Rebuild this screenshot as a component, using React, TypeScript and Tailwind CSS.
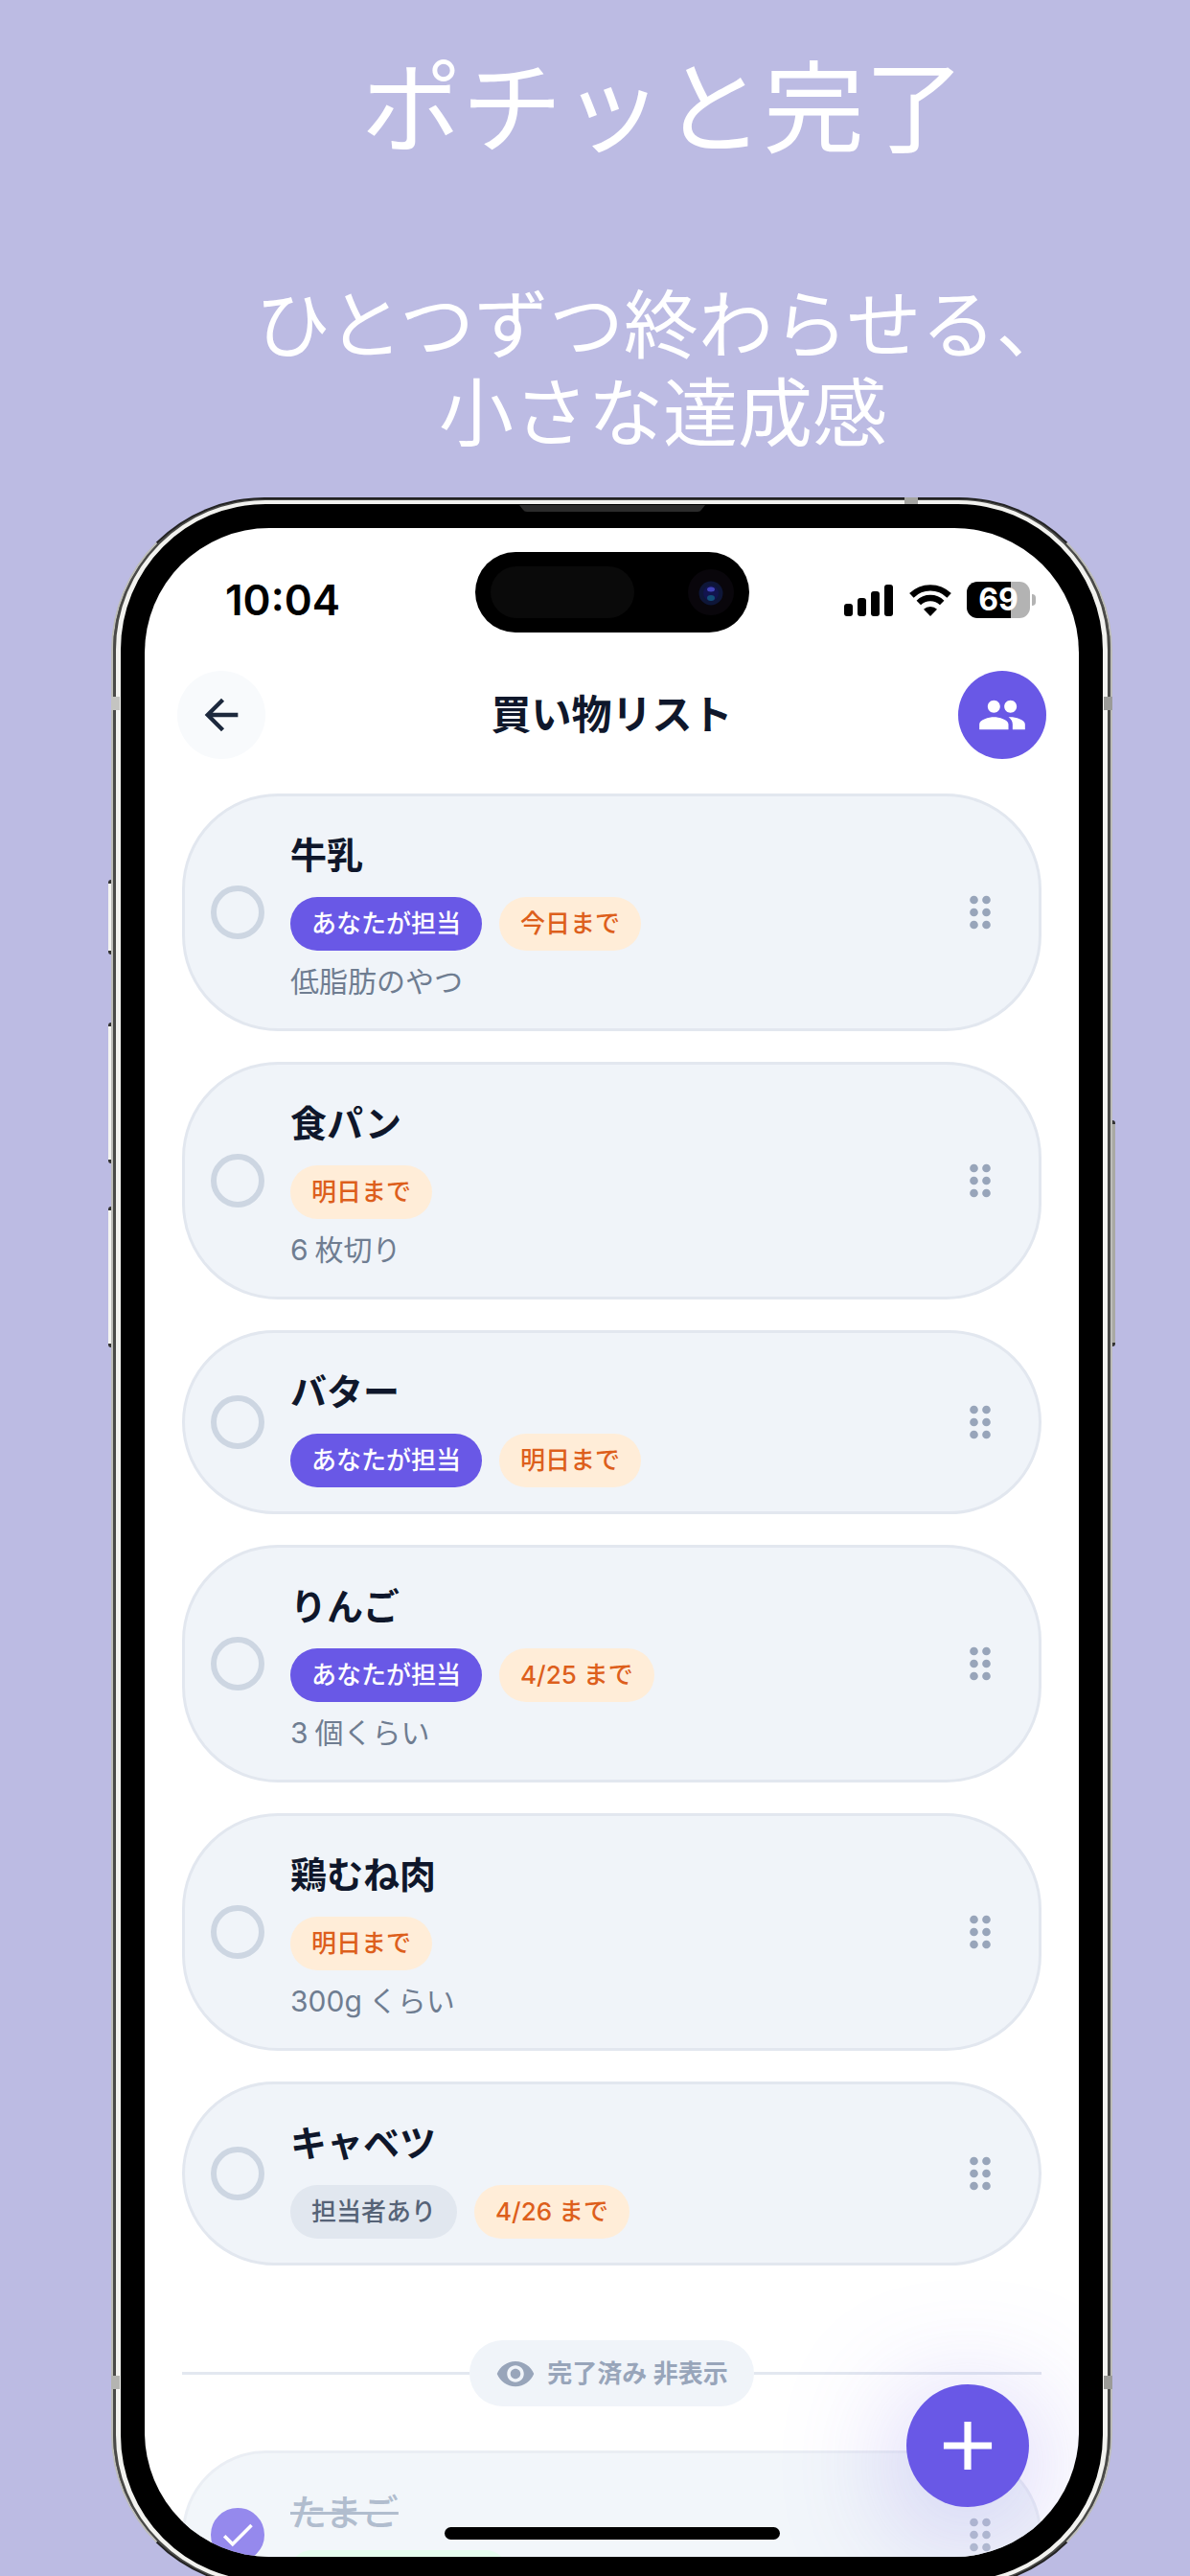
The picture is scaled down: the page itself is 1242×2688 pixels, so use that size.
import { useState } from "react";
import { clsx } from "clsx";
import {
  MdAdd,
  MdArrowBack,
  MdCheck,
  MdDragIndicator,
  MdPeople,
  MdVisibility,
} from "react-icons/md";

type TagKind = "mine" | "other" | "due";

type ShoppingItem = {
  id: string;
  name: string;
  tags: { kind: TagKind; label: string }[];
  note?: string;
};

const ITEMS: ShoppingItem[] = [
  {
    id: "milk",
    name: "牛乳",
    tags: [
      { kind: "mine", label: "あなたが担当" },
      { kind: "due", label: "今日まで" },
    ],
    note: "低脂肪のやつ",
  },
  { id: "bread", name: "食パン", tags: [{ kind: "due", label: "明日まで" }], note: "6枚切り" },
  {
    id: "butter",
    name: "バター",
    tags: [
      { kind: "mine", label: "あなたが担当" },
      { kind: "due", label: "明日まで" },
    ],
  },
  {
    id: "apple",
    name: "りんご",
    tags: [
      { kind: "mine", label: "あなたが担当" },
      { kind: "due", label: "4/25まで" },
    ],
    note: "3個くらい",
  },
  { id: "chicken", name: "鶏むね肉", tags: [{ kind: "due", label: "明日まで" }], note: "300gくらい" },
  {
    id: "cabbage",
    name: "キャベツ",
    tags: [
      { kind: "other", label: "担当者あり" },
      { kind: "due", label: "4/26まで" },
    ],
  },
];

const TAG_STYLES: Record<TagKind, string> = {
  mine: "bg-[#6958e6] text-white",
  other: "bg-[#e1e7ef] text-[#566377]",
  due: "bg-[#ffedd8] text-[#dd5f1c]",
};

// Leading digits keep a little distance from the Japanese text after them
function MixedText({ text }: { text: string }) {
  const lead = text.match(/^[\d/a-z]+/)?.[0] ?? "";

  return (
    <>
      {lead && <span className="mr-[7px]">{lead}</span>}
      {text.slice(lead.length)}
    </>
  );
}

function CheckCircle({
  id,
  checked,
  onChange,
}: {
  id: string;
  checked: boolean;
  onChange: () => void;
}) {
  return (
    <span className="relative flex size-14 shrink-0">
      <input
        id={id}
        type="checkbox"
        checked={checked}
        onChange={onChange}
        className="size-14 appearance-none rounded-full border-[6px] border-[#cdd6e2] checked:border-[#6958e6] checked:bg-[#6958e6]"
      />
      {checked && (
        <MdCheck className="pointer-events-none absolute inset-0 m-auto size-[42px] text-white" />
      )}
    </span>
  );
}

function DragHandle({ name }: { name: string }) {
  return (
    <button type="button" aria-label={`${name}を並べ替え`} className="shrink-0 text-[#98a5ba]">
      <MdDragIndicator className="size-[52px]" />
    </button>
  );
}

function ItemCard({ item }: { item: ShoppingItem }) {
  const [checked, setChecked] = useState(false);

  return (
    <li className="flex items-center gap-[27px] rounded-[100px] border-[3px] border-[#e2e7ef] bg-[#f0f4f9] py-[25px] pr-[35px] pl-[27px]">
      <CheckCircle id={item.id} checked={checked} onChange={() => setChecked(!checked)} />
      <div className="min-w-0 flex-1">
        <label htmlFor={item.id} className="mb-2 block text-[38px] leading-[72px] font-semibold text-slate-900">
          {item.name}
        </label>
        <div className="flex gap-[18px]">
          {item.tags.map((tag) => (
            <span
              key={tag.label}
              className={clsx("rounded-full px-[22px] text-[26px] leading-[56px] font-medium", TAG_STYLES[tag.kind])}
            >
              <MixedText text={tag.label} />
            </span>
          ))}
        </div>
        {item.note && (
          <p className="mt-2 text-[30px] leading-[48px] text-[#6f7d91]">
            <MixedText text={item.note} />
          </p>
        )}
      </div>
      <DragHandle name={item.name} />
    </li>
  );
}

function DoneCard() {
  const [checked, setChecked] = useState(true);

  return (
    <li className="flex items-center gap-[27px] rounded-[100px] border-[3px] border-[#e2e7ef] bg-[#edf3f8] py-[25px] pr-[35px] pl-[27px] opacity-70">
      <CheckCircle id="egg" checked={checked} onChange={() => setChecked(!checked)} />
      <div className="min-w-0 flex-1">
        <label htmlFor="egg" className="block text-[38px] leading-[72px] font-medium text-slate-400 line-through">
          たまご
        </label>
        <div className="mt-1 h-[43px] w-[226px] rounded-full bg-green-100" />
      </div>
      <DragHandle name="たまご" />
    </li>
  );
}

function StatusBar() {
  return (
    <div className="flex h-[149px] items-center justify-between pr-[45px] pl-[84px] text-black">
      <span className="text-[44px] leading-none font-semibold">10:04</span>
      <div className="flex items-center gap-4">
        <svg viewBox="0 0 52 34" className="h-[34px] w-[52px]" fill="currentColor">
          <rect x="0" y="21" width="9" height="13" rx="3" />
          <rect x="14" y="15" width="9" height="19" rx="3" />
          <rect x="28" y="8" width="9" height="26" rx="3" />
          <rect x="42" y="1" width="9" height="33" rx="3" />
        </svg>
        <svg viewBox="0 0 44 34" className="h-[34px] w-[44px]" fill="none" stroke="currentColor" strokeWidth="6.4">
          <path d="M2.4 12.4a28 28 0 0 1 39.2 0" />
          <path d="M9.8 20a17.4 17.4 0 0 1 24.4 0" />
          <path d="M22 34l-7-7.2a10 10 0 0 1 14 0z" fill="currentColor" stroke="none" />
        </svg>
        <div className="flex items-center gap-[2px]">
          <span className="flex h-[38px] w-[66px] items-center justify-center rounded-[11px] bg-[linear-gradient(90deg,#000_70%,#b3b3b3_70%)] text-[32px] leading-none font-bold text-white">
            69
          </span>
          <span className="h-3 w-1 rounded-r-full bg-[#b3b3b3]" />
        </div>
      </div>
    </div>
  );
}

function DynamicIsland() {
  return (
    <div className="absolute top-[25px] left-1/2 flex h-[84px] w-[286px] -translate-x-1/2 items-center justify-between rounded-full bg-black px-4">
      <div className="h-[54px] w-[150px] rounded-full bg-[#0a0a0a]" />
      <svg viewBox="0 0 48 48" className="size-12">
        <circle cx="24" cy="24" r="24" fill="#09060b" />
        <circle cx="24" cy="25" r="12.5" fill="#0e1638" />
        <circle cx="24" cy="25" r="8" fill="#12144e" />
        <ellipse cx="24" cy="21" rx="4" ry="2.5" fill="#4043b8" />
        <ellipse cx="24" cy="30" rx="4" ry="3" fill="#124f78" />
      </svg>
    </div>
  );
}

// Side keys and antenna bands of the phone body
function FrameDetails() {
  return (
    <>
      <span className="absolute top-[399px] -left-[3px] h-[78px] w-[3px] rounded-l border-y-4 border-[#333] bg-[#f4f4f1]" />
      <span className="absolute top-[548px] -left-[3px] h-[147px] w-[3px] rounded-l border-y-4 border-[#333] bg-[#f4f4f1]" />
      <span className="absolute top-[740px] -left-[3px] h-[147px] w-[3px] rounded-l border-y-4 border-[#333] bg-[#f4f4f1]" />
      <span className="absolute top-[650px] -right-[3px] h-[236px] w-[3px] rounded-r border-y-4 border-[#333] bg-[#a9a9a3]" />
      <span className="absolute top-[208px] left-0 h-[14px] w-[9px] bg-[#c4c4c1]" />
      <span className="absolute top-[208px] right-0 h-[14px] w-[9px] bg-[#9b9b98]" />
      <span className="absolute bottom-[207px] left-0 h-[14px] w-[9px] bg-[#b4b4b1]" />
      <span className="absolute right-0 bottom-[207px] h-[14px] w-[9px] bg-[#9b9b98]" />
      <span className="absolute top-0 right-[203px] h-[7px] w-[14px] bg-[#a5a5a2]" />
      <svg viewBox="0 0 194 7" className="absolute top-[8px] left-1/2 h-[7px] w-[194px] -translate-x-1/2" fill="#2b2b2b">
        <path d="M0 0h194l-4 5q-1 2-4 2H8q-3 0-4-2z" />
      </svg>
    </>
  );
}

export default function App() {
  return (
    <main className="flex h-screen flex-col overflow-hidden bg-[#bcbbe3] font-['Inter','Noto_Sans_CJK_JP',sans-serif]">
      <header className="pt-[55px] pl-[142px] text-center font-['Liberation_Sans','Noto_Sans_CJK_JP',sans-serif] text-white">
        <h1 className="text-[105px] leading-[120px]">ポチッと完了</h1>
        <p className="mt-[120px] text-[78px] leading-[92px]">
          ひとつずつ終わらせる、
          <br />
          小さな達成感
        </p>
      </header>

      <div className="relative mt-10 mr-[81px] -mb-3 ml-[116px] flex min-h-0 flex-1 flex-col">
        <div className="flex min-h-0 flex-1 flex-col rounded-[160px] border-2 border-x-[#bdbdb9] border-y-[#222] bg-[#4a4a48]">
          <div className="flex min-h-0 flex-1 flex-col rounded-[158px] border-x-[3px] border-y border-[#4a4a48] bg-[#4a4a48]">
            <div className="flex min-h-0 flex-1 flex-col rounded-[156px] border-x-[5px] border-y-4 border-[#f2f2ef] bg-black p-[25px]">
              <div className="relative min-h-0 flex-1 overflow-hidden rounded-[130px] bg-white">
                <StatusBar />
                <DynamicIsland />

                <div className="flex items-center justify-between px-[34px]">
                  <button
                    type="button"
                    aria-label="戻る"
                    className="flex size-[92px] items-center justify-center rounded-full bg-slate-50 text-slate-800"
                  >
                    <MdArrowBack className="size-[52px]" />
                  </button>
                  <h2 className="text-[42px] leading-[60px] font-semibold text-slate-900">買い物リスト</h2>
                  <button
                    type="button"
                    aria-label="メンバー"
                    className="flex size-[92px] items-center justify-center rounded-full bg-[#6958e6] text-white"
                  >
                    <MdPeople className="size-[52px]" />
                  </button>
                </div>

                <ul className="mt-9 flex flex-col gap-8 px-[39px]">
                  {ITEMS.map((item) => (
                    <ItemCard key={item.id} item={item} />
                  ))}
                </ul>

                <div className="mt-[78px] flex items-center px-[39px]">
                  <span className="h-[3px] flex-1 bg-[#e3e8f0]" />
                  <button
                    type="button"
                    className="flex items-center gap-3 rounded-full bg-[#f0f4f9] px-[27px] text-[26px] leading-[69px] font-semibold text-[#98a5ba]"
                  >
                    <MdVisibility className="size-[42px]" />
                    完了済み 非表示
                  </button>
                  <span className="h-[3px] flex-1 bg-[#e3e8f0]" />
                </div>

                <ul className="mt-[46px] px-[39px]">
                  <DoneCard />
                </ul>

                <button
                  type="button"
                  aria-label="追加"
                  className="absolute right-[52px] bottom-[52px] flex size-32 items-center justify-center rounded-full bg-[#6958e6] text-white shadow-[0_20px_130px_rgba(105,88,230,0.4)]"
                >
                  <MdAdd className="size-[86px]" />
                </button>
                <span className="absolute bottom-[18px] left-1/2 h-[13px] w-[350px] -translate-x-1/2 rounded-full bg-black" />
              </div>
            </div>
          </div>
        </div>
        <FrameDetails />
      </div>
    </main>
  );
}
